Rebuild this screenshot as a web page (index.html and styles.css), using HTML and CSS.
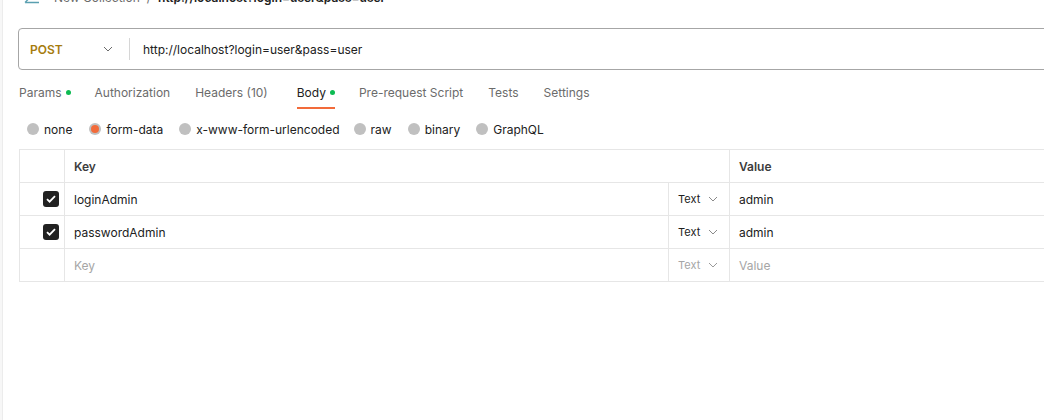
FILE: index.html
```html
<!DOCTYPE html>
<html>
<head>
<meta charset="utf-8">
<link rel="stylesheet" href="styles.css">
</head>
<body>
<div class="app">
  <div class="edge"></div>
  <div class="main">
    <div class="crumbs">
      <svg class="back" width="16" height="12" viewBox="0 0 16 12"><path d="M1 9.5h14M1 9.5l4-4" stroke="#5a9fb0" stroke-width="1.3" fill="none"/></svg>
      <span class="crumb-muted">New Collection</span>
      <span class="crumb-sep">/</span>
      <span class="crumb-cur">http://localhost?login=user&amp;pass=user</span>
    </div>
    <div class="urlbar">
      <div class="method">
        <span class="method-name">POST</span>
        <svg class="chev" width="10" height="6" viewBox="0 0 10 6"><path d="M1 1l4 4 4-4" stroke="#6b6b6b" stroke-width="1" fill="none"/></svg>
      </div>
      <div class="url">http://localhost?login=user&amp;pass=user</div>
    </div>
    <div class="tabs">
      <div class="tab">Params<span class="dot"></span></div>
      <div class="tab tab-a">Authorization</div>
      <div class="tab tab-wide">Headers (10)</div>
      <div class="tab active">Body<span class="dot"></span></div>
      <div class="tab tab-a">Pre-request Script</div>
      <div class="tab tab-a">Tests</div>
      <div class="tab">Settings</div>
    </div>
    <div class="radios">
      <label class="radio radio-first"><span class="circle"></span>none</label>
      <label class="radio"><span class="circle on"></span>form-data</label>
      <label class="radio radio-tight"><span class="circle"></span>x-www-form-urlencoded</label>
      <label class="radio"><span class="circle"></span>raw</label>
      <label class="radio"><span class="circle"></span>binary</label>
      <label class="radio"><span class="circle"></span>GraphQL</label>
    </div>
    <div class="table">
      <div class="row head">
        <div class="c-check"></div>
        <div class="c-key c-keyhead">Key</div>
        <div class="c-val">Value</div>
      </div>
      <div class="row">
        <div class="c-check"><span class="cb"><svg width="10" height="8" viewBox="0 0 10 8"><path d="M1 4.2l2.6 2.5L9 1.2" stroke="#fff" stroke-width="1.8" fill="none"/></svg></span></div>
        <div class="c-key">loginAdmin</div>
        <div class="c-type">Text<svg class="chev" width="10" height="6" viewBox="0 0 10 6"><path d="M1 1l4 4 4-4" stroke="#8a8a8a" stroke-width="1" fill="none"/></svg></div>
        <div class="c-val">admin</div>
      </div>
      <div class="row">
        <div class="c-check"><span class="cb"><svg width="10" height="8" viewBox="0 0 10 8"><path d="M1 4.2l2.6 2.5L9 1.2" stroke="#fff" stroke-width="1.8" fill="none"/></svg></span></div>
        <div class="c-key">passwordAdmin</div>
        <div class="c-type">Text<svg class="chev" width="10" height="6" viewBox="0 0 10 6"><path d="M1 1l4 4 4-4" stroke="#8a8a8a" stroke-width="1" fill="none"/></svg></div>
        <div class="c-val">admin</div>
      </div>
      <div class="row">
        <div class="c-check"></div>
        <div class="c-key ph">Key</div>
        <div class="c-type ph">Text<svg class="chev" width="10" height="6" viewBox="0 0 10 6"><path d="M1 1l4 4 4-4" stroke="#9a9a9a" stroke-width="1" fill="none"/></svg></div>
        <div class="c-val ph">Value</div>
      </div>
    </div>
  </div>
</div>
</body>
</html>
```

FILE: styles.css
```css
* { box-sizing: border-box; }
html, body { margin: 0; padding: 0; background: #fff; overflow: hidden; }
body {
  font-family: Inter, "Noto Sans", sans-serif;
  color: #212121;
  width: 1044px;
  height: 420px;
}
.app { display: flex; height: 420px; }
.edge {
  width: 3px;
  flex: none;
  background: #f7f7f7;
  border-right: 1px solid #ececec;
}
.main {
  flex: 1;
  padding-left: 15px;
  min-width: 0;
}
.crumbs {
  display: flex;
  align-items: center;
  height: 16px;
  margin-top: -11px;
  font-size: 12px;
  white-space: nowrap;
  padding-left: 6px;
}
.back { margin-right: 14px; margin-top: 4px; }
.crumb-muted { color: #6b6b6b; }
.crumb-sep { color: #6b6b6b; margin: 0 7px; }
.crumb-cur { font-weight: 600; color: #212121; }
.urlbar {
  margin-top: 23px;
  margin-right: -20px;
  height: 42px;
  border: 1px solid #a6a6a6;
  border-radius: 4px;
  display: flex;
  align-items: center;
}
.method {
  width: 111px;
  height: 22px;
  display: flex;
  align-items: center;
  justify-content: space-between;
  padding-left: 11px;
  padding-right: 16px;
  border-right: 1px solid #d6d6d6;
}
.method-name { font-size: 12px; font-weight: 600; color: #a67c0e; }
.url { padding-left: 13px; font-size: 12px; color: #212121; }
.tabs {
  display: flex;
  height: 38px;
  margin-top: 1px;
  padding-left: 1px;
}
.tab {
  display: flex;
  align-items: center;
  font-size: 12px;
  color: #6b6b6b;
  margin-right: 24px;
  border-bottom: 2px solid transparent;
  padding-top: 6px;
}
.tab.tab-a { margin-right: 25px; }
.tab.tab-wide { margin-right: 29px; }
.tab.active { color: #212121; border-bottom-color: #f26b3a; }
.dot {
  width: 5px; height: 5px; border-radius: 50%;
  background: #0cbb52;
  margin-left: 4px;
}
.radios {
  display: flex;
  align-items: center;
  height: 40px;
  padding-left: 9px;
}
.radio {
  display: flex;
  align-items: center;
  font-size: 12px;
  color: #212121;
  margin-right: 16px;
}
.radio.radio-first { margin-right: 17px; }
.radio.radio-tight { margin-right: 14px; }
.circle {
  width: 12px; height: 12px; border-radius: 50%;
  background: #c0c0c0;
  margin-right: 5px;
  display: flex; align-items: center; justify-content: center;
}
.circle.on::after {
  content: "";
  width: 8px; height: 8px; border-radius: 50%;
  background: #f26b3a;
}
.table {
  margin-left: 1px;
  margin-right: -20px;
  border-top: 1px solid #e6e6e6;
  border-left: 1px solid #e6e6e6;
}
.row {
  display: flex;
  height: 33px;
  border-bottom: 1px solid #e6e6e6;
  font-size: 12px;
}
.row > div { display: flex; align-items: center; }
.c-check {
  width: 45px; flex: none;
  border-right: 1px solid #e6e6e6;
  justify-content: flex-end;
  padding-right: 5px;
}
.c-key {
  width: 604px; flex: none;
  padding-left: 9px;
  border-right: 1px solid #e6e6e6;
}
.head .c-keyhead { width: 665px; }
.head > div { font-weight: 600; color: #3d3d3d; }
.c-type {
  width: 61px; flex: none;
  padding-left: 9px;
  border-right: 1px solid #e6e6e6;
  font-size: 11px;
}
.c-type .chev { margin-left: 8px; }
.c-val { flex: 1; padding-left: 9px; }
.ph { color: #a6a6a6; }
.cb {
  width: 16px; height: 16px;
  background: #212121;
  border-radius: 3px;
  display: flex; align-items: center; justify-content: center;
}
```
